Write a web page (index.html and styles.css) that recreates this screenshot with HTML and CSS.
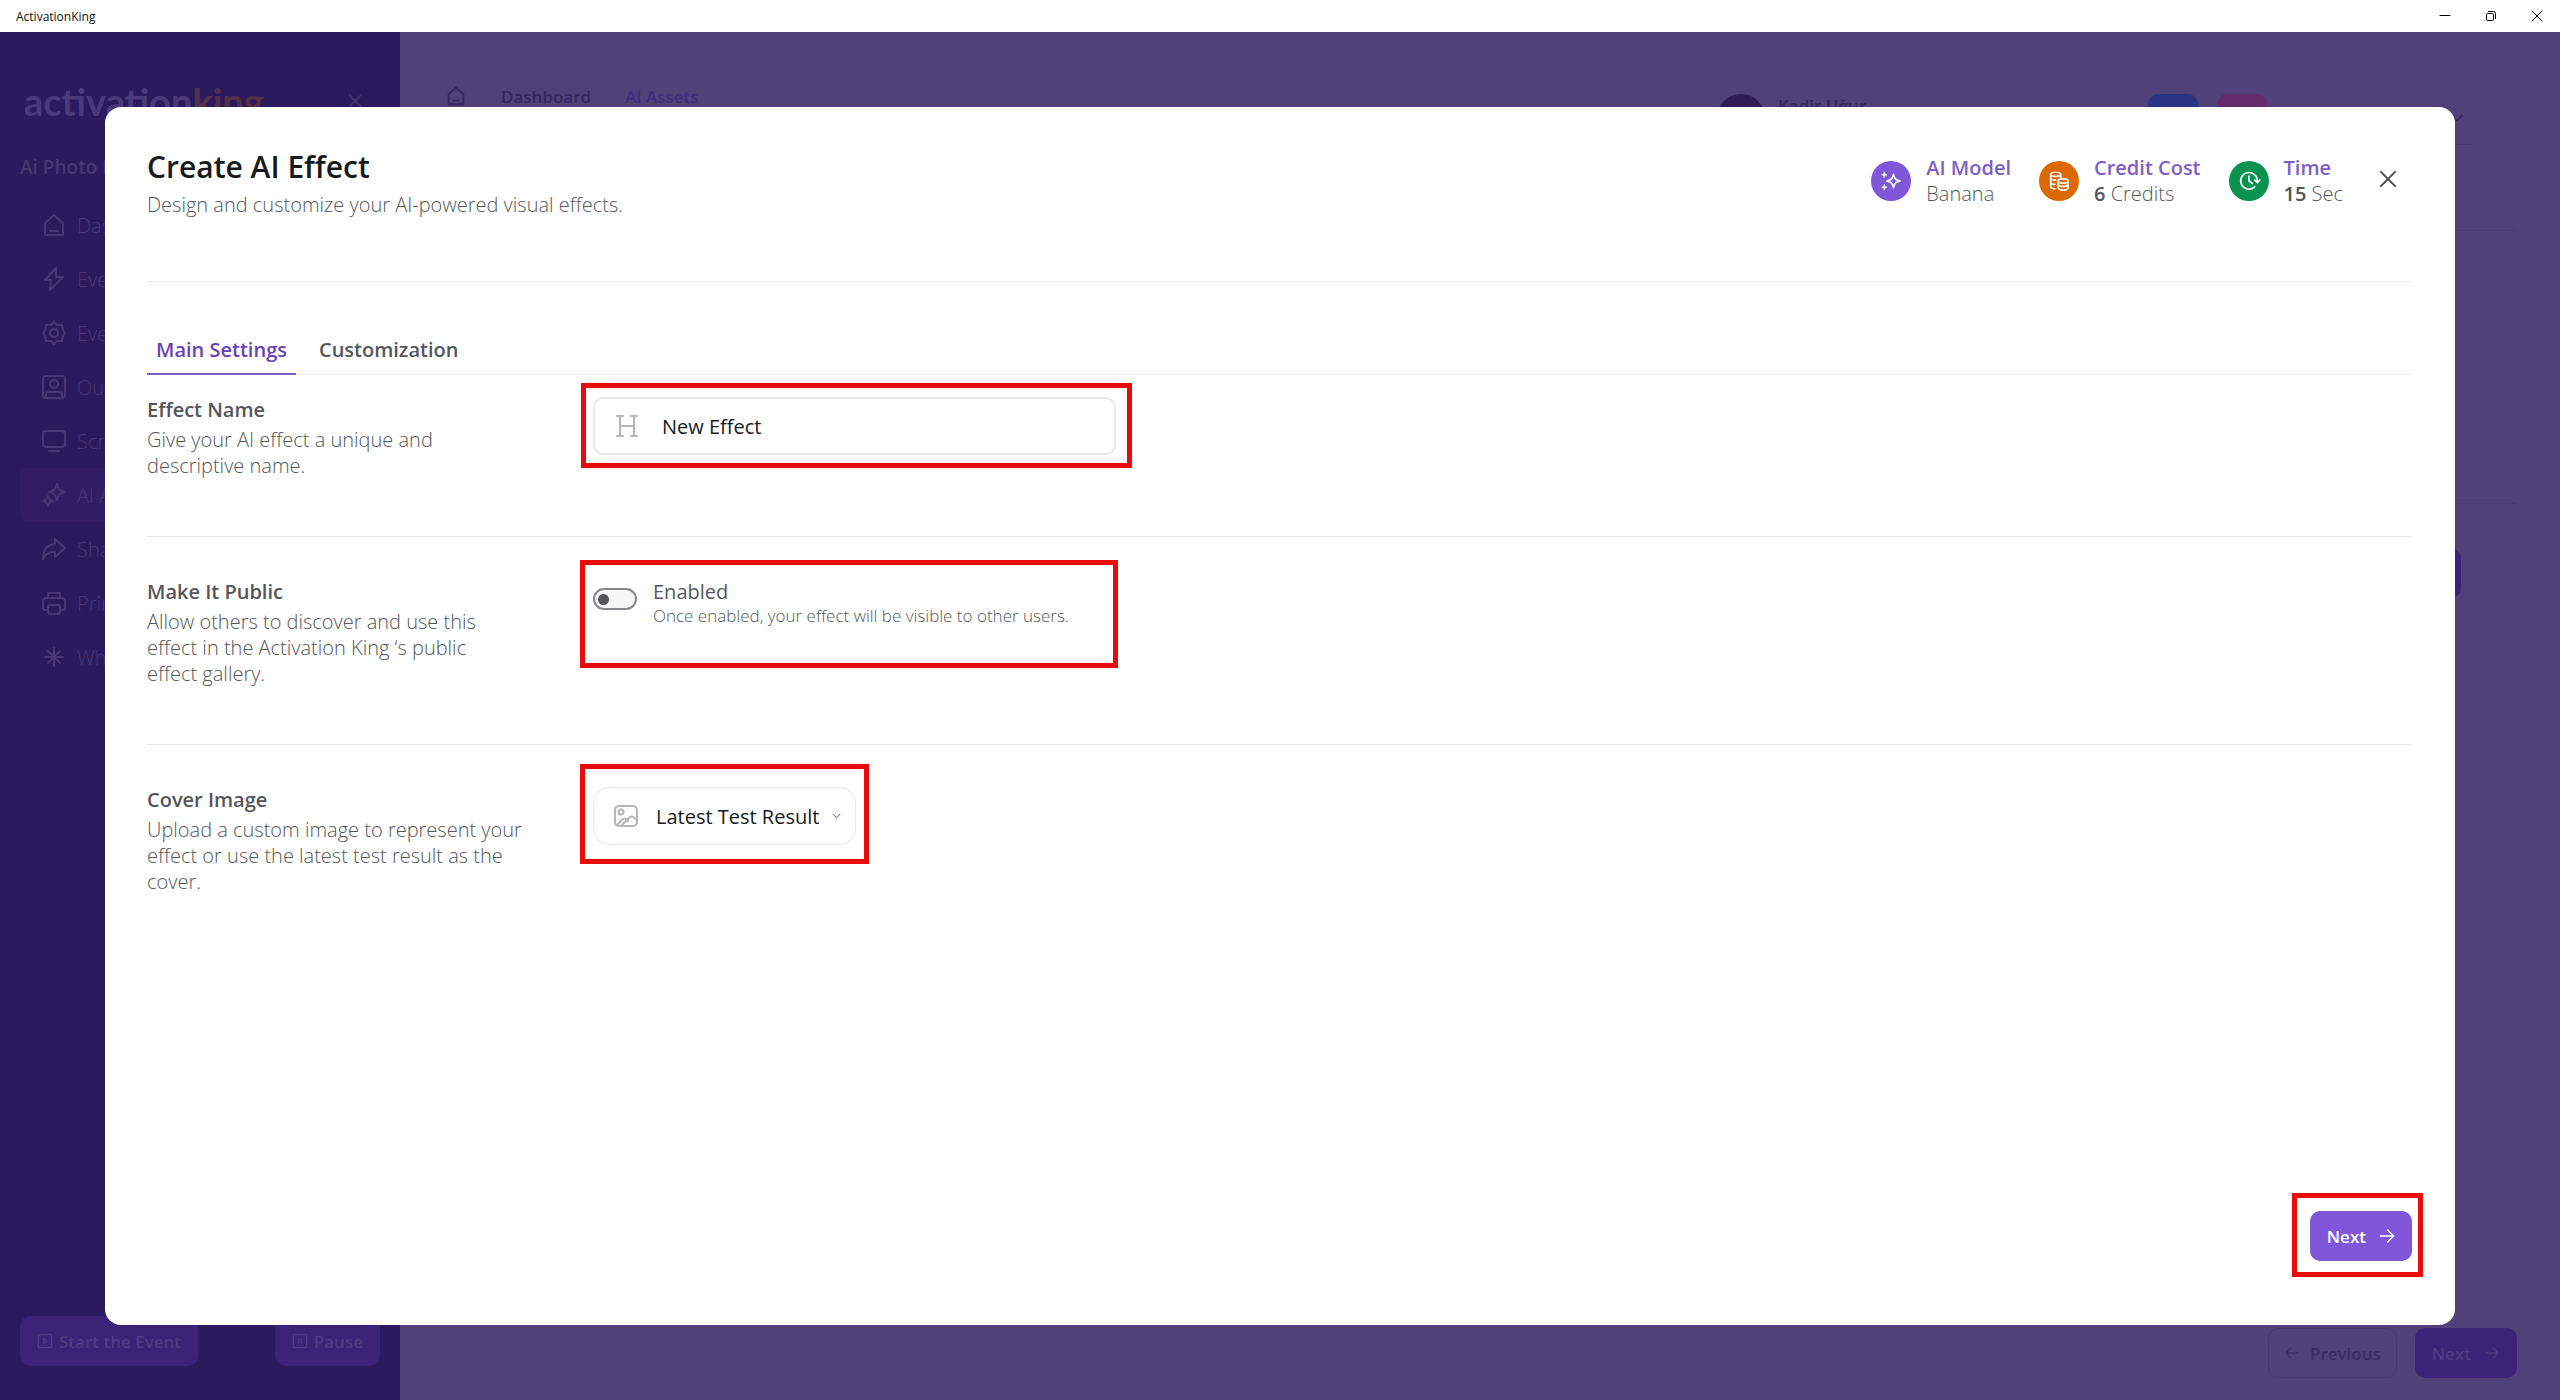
FILE: index.html
```html
<!DOCTYPE html>
<html lang="en">
<head>
    <meta charset="UTF-8">
    <meta name="viewport" content="width=device-width, initial-scale=1.0">
    <title>ActivationKing</title>
    <link rel="stylesheet" href="styles.css">
</head>
<body>
    <header class="titlebar">
        <span class="titlebar-name">ActivationKing</span>
        <div class="window-controls">
            <button aria-label="Minimize"><svg width="12" height="12" viewBox="0 0 12 12"><path d="M1 5.5h10"/></svg></button>
            <button aria-label="Restore"><svg width="12" height="12" viewBox="0 0 12 12"><rect x="1.5" y="3.5" width="7" height="7" rx="1"/><path d="M3.5 1.5h5a2 2 0 0 1 2 2v5"/></svg></button>
            <button aria-label="Close"><svg width="12" height="12" viewBox="0 0 12 12"><path d="M1 1l10 10M11 1L1 11"/></svg></button>
        </div>
    </header>

    <div class="app">
        <aside class="sidebar">
            <div class="brand">
                <div class="logo">activation<span>king</span></div>
                <svg class="icon brand-close" viewBox="0 0 24 24"><path d="M5 5l14 14M19 5L5 19"/></svg>
            </div>
            <div class="event-name">Ai Photo B</div>
            <nav class="nav">
                <a href="#"><svg class="icon" viewBox="0 0 24 24"><path d="M3 10l9-8 9 8v12H3zM8 18h8"/></svg>Dash</a>
                <a href="#"><svg class="icon" viewBox="0 0 24 24"><path d="M14 1L3 13h6l-1 10 13-13h-7z"/></svg>Event</a>
                <a href="#"><svg class="icon" viewBox="0 0 24 24"><path d="M12 1l3 3 5 0 1 5 2 3-2 3-1 5-5 0-3 3-3-3-5 0-1-5-2-3 2-3 1-5 5 0z"/><circle cx="12" cy="12" r="4"/></svg>Event</a>
                <a href="#"><svg class="icon" viewBox="0 0 24 24"><rect x="1" y="1" width="22" height="22" rx="3"/><circle cx="12" cy="9" r="4"/><path d="M4 22v-3q0-2 3-2h10q3 0 3 2v3"/></svg>Output</a>
                <a href="#"><svg class="icon" viewBox="0 0 24 24"><rect x="1" y="2" width="22" height="16" rx="3"/><path d="M7 22h10"/></svg>Screen</a>
                <a href="#" class="active"><svg class="icon" viewBox="0 0 24 24"><path d="M15 1q1 7 8 8-7 1-8 8-1-7-8-8 7-1 8-8zM6 13q1 4 5 5-4 1-5 5-1-4-5-5 4-1 5-5z"/></svg>AI Asset</a>
                <a href="#"><svg class="icon" viewBox="0 0 24 24"><path d="M13 2l10 9-10 9v-5q-8-1-12 7 0-14 12-15z"/></svg>Share</a>
                <a href="#"><svg class="icon" viewBox="0 0 24 24"><path d="M6 7V2h12v5M6 19H3q-2 0-2-2v-7q0-3 3-3h16q3 0 3 3v7q0 2-2 2h-3"/><rect x="6" y="14" width="12" height="9" rx="2"/></svg>Print</a>
                <a href="#"><svg class="icon" viewBox="0 0 24 24"><path d="M12 3v18M3 12h18M6 6l12 12M18 6L6 18"/></svg>What</a>
            </nav>
            <div class="sidebar-actions">
                <button class="btn btn-muted"><svg class="icon" viewBox="0 0 24 24"><rect x="2" y="2" width="20" height="20" rx="3"/><path d="M10 8l5 4-5 4z"/></svg>Start the Event</button>
                <button class="btn btn-muted"><svg class="icon" viewBox="0 0 24 24"><rect x="2" y="2" width="20" height="20" rx="3"/><path d="M10 8v7M14 8v7"/></svg>Pause</button>
            </div>
        </aside>

        <main class="content">
            <div class="topbar">
                <div class="breadcrumb">
                    <svg class="icon" viewBox="0 0 24 24"><path d="M4 10l8-7 8 7v11H4zM9 17h6"/></svg>
                    <span>Dashboard</span>
                    <a href="#">AI Assets</a>
                </div>
                <div class="account">
                    <div class="avatar"></div>
                    <span class="account-name">Kadir Uğur</span>
                    <div class="tile tile-blue"></div>
                    <div class="tile tile-pink"></div>
                    <svg class="icon account-arrow" viewBox="0 0 24 24"><path d="M4 8l8 8 8-8"/></svg>
                </div>
            </div>
            <div class="panel panel-top"></div>
            <div class="panel panel-list"><button class="btn btn-muted panel-add" aria-label="Add"></button></div>
            <div class="content-actions">
                <button class="btn btn-outline"><svg class="icon" viewBox="0 0 24 24"><path d="M21 12H3M10 5l-7 7 7 7"/></svg>Previous</button>
                <button class="btn btn-muted btn-next">Next<svg class="icon" viewBox="0 0 24 24"><path d="M3 12h18M14 5l7 7-7 7"/></svg></button>
            </div>
        </main>
    </div>

    <div class="overlay">
        <section class="modal" role="dialog" aria-labelledby="modalTitle">
            <div class="modal-header">
                <div class="modal-heading">
                    <h1 id="modalTitle">Create AI Effect</h1>
                    <p>Design and customize your AI-powered visual effects.</p>
                </div>
                <div class="stats">
                    <div class="stat">
                        <span class="stat-icon purple"><svg viewBox="0 0 24 24"><path d="M15 4q1 7 8 8-7 1-8 8-1-7-8-8 7-1 8-8zM4 2v5M1.500 4.500h5M4 17v5M1.500 19.500h5"/></svg></span>
                        <div><strong>AI Model</strong><span>Banana</span></div>
                    </div>
                    <div class="stat">
                        <span class="stat-icon orange"><svg viewBox="0 0 24 24"><ellipse cx="8" cy="4" rx="6" ry="2.500"/><path d="M2 4v15q0 2 5 2.500M2 9q1 2 6 2M2 14q1 2 5 2M14 4v4"/><ellipse cx="17" cy="12" rx="6" ry="2.500"/><path d="M11 12v8q1 3 6 3t6-3v-8M11 16q1 2.500 6 2.500t6-2.500"/></svg></span>
                        <div><strong>Credit Cost</strong><span><b>6</b> Credits</span></div>
                    </div>
                    <div class="stat">
                        <span class="stat-icon green"><svg viewBox="0 0 24 24"><path d="M19 19a10 10 0 1 1 3-7M19 11l3 3 3-3M12 6v6l4 3"/></svg></span>
                        <div><strong>Time</strong><span><b>15</b> Sec</span></div>
                    </div>
                    <button class="modal-close" aria-label="Close dialog"><svg viewBox="0 0 18 18"><path d="M1 1l16 16M17 1L1 17"/></svg></button>
                </div>
            </div>

            <div class="tabs" role="tablist">
                <button class="tab selected" role="tab" aria-selected="true">Main Settings</button>
                <button class="tab" role="tab" aria-selected="false">Customization</button>
            </div>

            <div class="setting">
                <div class="setting-info">
                    <label for="effectName">Effect Name</label>
                    <p>Give your AI effect a unique and descriptive name.</p>
                </div>
                <div class="field name-field">
                    <svg class="field-icon" viewBox="0 0 24 24"><path d="M5 2v20M19 2v20M5 12h14M2 2h6M16 2h6M2 22h6M16 22h6"/></svg>
                    <input type="text" id="effectName" value="New Effect">
                    <span class="highlight highlight-name"></span>
                </div>
            </div>

            <div class="setting">
                <div class="setting-info">
                    <h2>Make It Public</h2>
                    <p>Allow others to discover and use this effect in the Activation King ‘s public effect&nbsp;gallery.</p>
                </div>
                <div class="field public-field">
                    <input type="checkbox" class="toggle" id="makePublic">
                    <label for="makePublic">Enabled<small>Once enabled, your effect will be visible to other users.</small></label>
                    <span class="highlight highlight-public"></span>
                </div>
            </div>

            <div class="setting">
                <div class="setting-info">
                    <label for="coverImage">Cover Image</label>
                    <p>Upload a custom image to represent your effect or use the latest test result as the cover.</p>
                </div>
                <div class="field cover-field">
                    <svg class="field-icon" viewBox="0 0 24 24"><rect x="1" y="2" width="22" height="20" rx="4"/><circle cx="7" cy="8" r="2.500"/><path d="M3 21l6-6q2-1 3 0l2 2M8 21l8-8q2-1 3 0l4 3"/></svg>
                    <select id="coverImage">
                        <option>Latest Test Result</option>
                    </select>
                    <svg class="select-arrow" viewBox="0 0 10 6"><path d="M1 1l4 4 4-4"/></svg>
                    <span class="highlight highlight-cover"></span>
                </div>
            </div>

            <div class="modal-footer">
                <div class="field">
                    <button class="btn btn-primary btn-next">Next<svg class="icon" viewBox="0 0 24 24"><path d="M2 12h20M13 3l9 9-9 9"/></svg></button>
                    <span class="highlight highlight-next"></span>
                </div>
            </div>
        </section>
    </div>
</body>
</html>
```

FILE: styles.css
```css
* {
    box-sizing: border-box;
}

body {
    margin: 0;
    height: 100vh;
    display: flex;
    flex-direction: column;
    overflow: hidden;
    font-family: 'Segoe UI', 'Open Sans', sans-serif;
    font-size: 20px;
    color: #54565a;
    background-color: #fff;
}

h1, h2, p {
    margin: 0;
}

button, input, select {
    font-family: inherit;
}

button {
    border: none;
    background: none;
    padding: 0;
    cursor: pointer;
}

svg {
    fill: none;
    stroke: currentColor;
    stroke-width: 2;
    stroke-linecap: round;
    stroke-linejoin: round;
    flex-shrink: 0;
}

a {
    color: inherit;
    text-decoration: none;
}

.icon {
    width: 24px;
    height: 24px;
}

/* window title bar */
.titlebar {
    display: flex;
    justify-content: space-between;
    align-items: center;
    height: 32px;
    padding: 0 17px 0 16px;
    flex-shrink: 0;
}

.titlebar-name {
    font-size: 12px;
    color: #111;
}

.window-controls {
    display: flex;
    gap: 34px;
}

.window-controls button {
    height: 12px;
    display: flex;
    color: #000;
}

.window-controls svg {
    stroke-width: 1;
}

/* dimmed app behind the dialog */
.app {
    flex: 1;
    display: flex;
    min-height: 0;
}

.sidebar {
    width: 400px;
    background-color: #2c1a5e;
    color: #483675;
    padding: 42px 20px 34px;
    display: flex;
    flex-direction: column;
}

.brand {
    display: flex;
    justify-content: space-between;
    align-items: center;
    height: 54px;
    padding-right: 16px;
}

.logo {
    font-family: 'Lato', sans-serif;
    font-size: 38px;
    line-height: 48px;
    font-weight: 700;
    color: #4a3a7c;
    padding-left: 4px;
}

.logo span {
    color: #523048;
}

.brand-close {
    width: 18px;
    height: 18px;
}

.event-name {
    margin-top: 26px;
    line-height: 26px;
    font-size: 19px;
    font-weight: 600;
}

.nav {
    margin-top: 18px;
    display: flex;
    flex-direction: column;
}

.nav a {
    height: 54px;
    padding-left: 22px;
    display: flex;
    align-items: center;
    gap: 11px;
    border-radius: 8px;
    font-size: 20px;
    font-weight: 300;
}

.nav .active {
    background-color: #321d65;
}

.sidebar-actions {
    margin-top: auto;
    display: flex;
    justify-content: space-between;
}

.sidebar-actions .icon {
    width: 18px;
    height: 18px;
}

.btn {
    height: 50px;
    padding: 0 17px;
    display: flex;
    align-items: center;
    gap: 6px;
    border-radius: 10px;
    font-size: 17px;
    font-weight: 600;
}

.btn-muted {
    background-color: #3b2378;
    color: #513a83;
}

.btn-outline {
    padding: 0 15px;
    border: 1px solid #473a70;
    color: #3a2c66;
    gap: 10px;
}

.btn-primary {
    background-color: #8057d9;
    color: #fff;
}

.btn-next {
    gap: 13px;
}

.btn .icon {
    width: 16px;
    height: 16px;
}

.content {
    flex: 1;
    background-color: #504279;
    padding: 42px 43px 22px 45px;
    display: flex;
    flex-direction: column;
}

.topbar {
    display: flex;
    justify-content: space-between;
    height: 71px;
    margin-right: 44px;
    border-bottom: 1px solid #483a71;
    color: #352560;
}

.breadcrumb {
    display: flex;
    align-items: center;
    height: 44px;
    gap: 34px;
    font-size: 17px;
    font-weight: 600;
}

.breadcrumb .icon {
    width: 22px;
    height: 22px;
}

.breadcrumb a {
    color: #412c80;
}

.account {
    display: flex;
    padding: 20px 8px 0 0;
}

.avatar {
    width: 48px;
    height: 48px;
    border-radius: 50%;
    background-color: #301c59;
}

.account-name {
    width: 383px;
    padding-left: 13px;
    font-size: 17px;
    line-height: 24px;
    font-weight: 600;
}

.tile {
    width: 50px;
    height: 46px;
    border-radius: 10px;
    margin-right: 19px;
}

.tile-blue {
    background-color: #2b3384;
}

.tile-pink {
    background-color: #632a6c;
}

.account-arrow {
    width: 16px;
    margin: 12px 0 0 163px;
}

.panel {
    border-top: 1px solid #4a3c73;
}

.panel-top {
    margin-top: 85px;
    height: 273px;
}

.panel-list {
    padding: 44px 56px 0 0;
    display: flex;
    justify-content: flex-end;
}

.panel-add {
    width: 60px;
}

.content-actions {
    margin-top: auto;
    display: flex;
    justify-content: flex-end;
    gap: 18px;
}

/* dialog */
.overlay {
    position: fixed;
    inset: 32px 0 0;
    padding: 75px 105px;
    display: flex;
}

.modal {
    flex: 1;
    background-color: #fff;
    border-radius: 16px;
    padding: 40px 43px 64px 42px;
    display: flex;
    flex-direction: column;
}

.modal-header {
    display: flex;
    justify-content: space-between;
    align-items: flex-start;
    padding-bottom: 63px;
    border-bottom: 1px solid #e8e9ea;
}

.modal-heading h1 {
    font-size: 30px;
    line-height: 40px;
    font-weight: 600;
    color: #17191c;
}

.modal-heading p {
    margin-top: 5px;
    line-height: 26px;
    font-weight: 300;
}

.stats {
    display: flex;
    align-items: center;
    gap: 28px;
    padding: 8px 16px 0 0;
}

.stat {
    display: flex;
    align-items: center;
    gap: 15px;
    line-height: 26px;
    font-weight: 300;
}

.stat strong,
.stat div span {
    display: block;
}

.stat strong {
    font-weight: 600;
    color: #7d5fc6;
}

.stat b {
    font-weight: 600;
}

.stat-icon {
    width: 40px;
    height: 40px;
    border-radius: 50%;
    display: flex;
    align-items: center;
    justify-content: center;
    color: #fff;
}

.stat-icon svg {
    width: 20px;
    height: 20px;
    overflow: visible;
}

.purple {
    background-color: #8057d9;
}

.orange {
    background-color: #dc6803;
}

.green {
    background-color: #099250;
}

.modal-close {
    display: flex;
    margin: 0 0 5px 9px;
    color: #44474a;
}

.modal-close svg {
    width: 16px;
    height: 16px;
}

.tabs {
    margin-top: 55px;
    display: flex;
    gap: 14px;
    border-bottom: 1px solid #e8e9ea;
}

.tab {
    padding: 0 9px 10px;
    margin-bottom: -1px;
    border-bottom: 2px solid transparent;
    font-size: 20px;
    line-height: 26px;
    font-weight: 600;
    color: #54565a;
}

.tab.selected {
    color: #6941b8;
    border-bottom-color: #7d5fc6;
}

.setting {
    display: flex;
    align-items: flex-start;
    padding: 42px 0 57px;
    border-bottom: 1px solid #e8e9ea;
}

.tabs + .setting {
    padding-top: 22px;
}

.setting:nth-last-child(2) {
    border-bottom: none;
}

.setting-info {
    width: 446px;
    padding-right: 68px;
    line-height: 26px;
    font-weight: 300;
}

.setting-info label,
.setting-info h2 {
    display: block;
    margin-bottom: 4px;
    font-size: 20px;
    font-weight: 600;
}

.field {
    position: relative;
    display: flex;
    align-items: center;
}

.field-icon {
    width: 24px;
    height: 24px;
    color: #b4b6b8;
}

.name-field {
    width: 523px;
    height: 58px;
    padding: 0 20px;
    gap: 23px;
    border: 2px solid #e8e9ea;
    border-radius: 10px;
}

.name-field input {
    flex: 1;
    border: none;
    outline: none;
    padding: 0;
    font-size: 20px;
    color: #17191c;
}

.public-field {
    align-items: flex-start;
    gap: 16px;
}

.public-field label {
    font-size: 20px;
    line-height: 26px;
}

.public-field small {
    display: block;
    font-size: 17px;
    line-height: 22px;
    font-weight: 300;
}

.toggle {
    appearance: none;
    display: flex;
    align-items: center;
    width: 44px;
    height: 22px;
    margin: 9px 0 0;
    padding-left: 3px;
    border: 2px solid #85878a;
    border-radius: 11px;
    background-color: #f7f7f8;
}

.toggle::before {
    content: '';
    width: 11px;
    height: 11px;
    border-radius: 50%;
    background-color: #54565a;
}

.toggle:checked {
    padding-left: 26px;
}

.cover-field {
    height: 58px;
    padding: 0 14px 0 20px;
    border: 1px solid #e8e9ea;
    border-radius: 16px;
}

.cover-field select {
    appearance: none;
    border: none;
    outline: none;
    background: none;
    padding: 0 12px 0 18px;
    font-size: 20px;
    color: #17191c;
}

.select-arrow {
    width: 9px;
    height: 6px;
    stroke-width: 1;
}

.modal-footer {
    margin-top: auto;
    display: flex;
    justify-content: flex-end;
}

/* red frames drawn over the steps */
.highlight {
    position: absolute;
    border: 5px solid #ea0a0a;
    pointer-events: none;
}

.highlight-name {
    inset: -16px -18px -15px -14px;
}

.highlight-public {
    inset: -19px -49px -41px -13px;
}

.highlight-cover {
    inset: -24px -14px -20px -14px;
}

.highlight-next {
    inset: -18px -11px -16px -18px;
}
```
